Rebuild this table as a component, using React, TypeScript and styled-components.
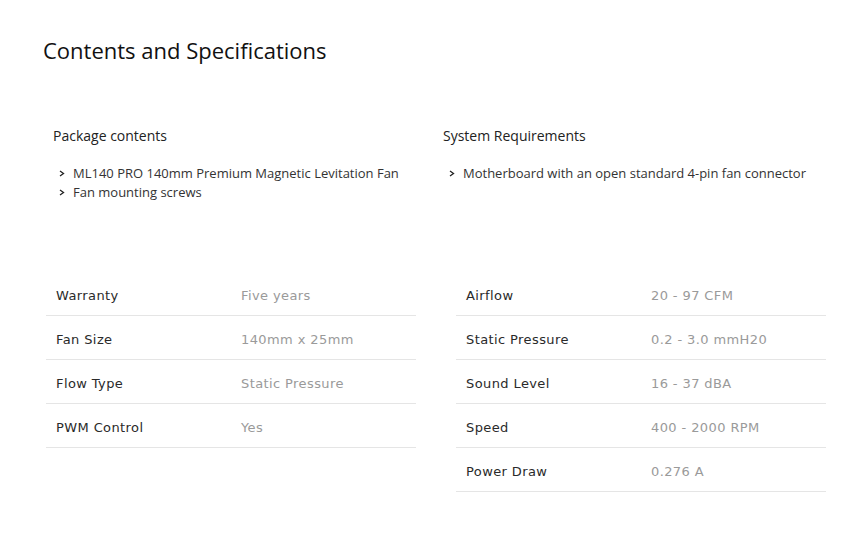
import styled, { createGlobalStyle } from "styled-components";

const GlobalStyle = createGlobalStyle`
  html, body {
    margin: 0;
    padding: 0;
    background: #fff;
  }
`;

const packageContents = [
  "ML140 PRO 140mm Premium Magnetic Levitation Fan",
  "Fan mounting screws",
];
const requirements = ["Motherboard with an open standard 4-pin fan connector"];

const leftSpecs = [
  ["Warranty", "Five years"],
  ["Fan Size", "140mm x 25mm"],
  ["Flow Type", "Static Pressure"],
  ["PWM Control", "Yes"],
];
const rightSpecs = [
  ["Airflow", "20 - 97 CFM"],
  ["Static Pressure", "0.2 - 3.0 mmH20"],
  ["Sound Level", "16 - 37 dBA"],
  ["Speed", "400 - 2000 RPM"],
  ["Power Draw", "0.276 A"],
];

const Chevron = () => (
  <svg width="6" height="7" viewBox="0 0 6 7">
    <path d="M1 1 L4.5 3.5 L1 6" fill="none" stroke="#222" strokeWidth="1.3" />
  </svg>
);

const SpecTable = ({ rows }: { rows: string[][] }) => (
  <Table>
    {rows.map(([label, value]) => (
      <Row key={label}>
        <Label>{label}</Label>
        <Value>{value}</Value>
      </Row>
    ))}
  </Table>
);

const App = () => {
  return (
    <Page>
      <GlobalStyle />
      <Title>Contents and Specifications</Title>
      <Columns>
        <Column>
          <Heading>Package contents</Heading>
          <List>
            {packageContents.map((item) => (
              <Item key={item}>
                <Chevron />
                <span>{item}</span>
              </Item>
            ))}
          </List>
        </Column>
        <Column>
          <Heading>System Requirements</Heading>
          <List>
            {requirements.map((item) => (
              <Item key={item}>
                <Chevron />
                <span>{item}</span>
              </Item>
            ))}
          </List>
        </Column>
      </Columns>
      <Tables>
        <SpecTable rows={leftSpecs} />
        <SpecTable rows={rightSpecs} />
      </Tables>
    </Page>
  );
};

export default App;

const Page = styled.div`
  width: 860px;
  height: 543px;
  box-sizing: border-box;
  padding: 35px 0 0 43px;
  font-family: "Open Sans", sans-serif;
  color: #222;
`;

const Title = styled.h1`
  margin: 0;
  font-size: 22px;
  font-weight: 400;
  line-height: 30px;
  color: #111;
`;

const Columns = styled.div`
  display: grid;
  grid-template-columns: 390px 390px;
  margin-top: 61px;
  padding-left: 10px;
`;

const Column = styled.div`
  display: flex;
  flex-direction: column;
`;

const Heading = styled.h3`
  margin: 0;
  font-size: 14px;
  font-weight: 400;
  line-height: 20px;
  color: #222;
`;

const List = styled.ul`
  list-style: none;
  margin: 18px 0 0;
  padding: 0 0 0 6px;
`;

const Item = styled.li`
  display: flex;
  align-items: center;
  gap: 8px;
  font-size: 13px;
  line-height: 19px;
  color: #333;
  svg {
    flex: none;
  }
`;

const Tables = styled.div`
  display: flex;
  gap: 40px;
  margin-top: 70px;
  padding-left: 3px;
  align-items: flex-start;
`;

const Table = styled.div`
  width: 370px;
  display: flex;
  flex-direction: column;
`;

const Row = styled.div`
  display: grid;
  grid-template-columns: 185px 1fr;
  height: 44px;
  padding-top: 3px;
  align-items: center;
  border-bottom: 1px solid #e5e5e5;
  box-sizing: border-box;
  font-family: "DejaVu Sans", sans-serif;
  font-size: 13px;
  letter-spacing: 0.4px;
`;

const Label = styled.div`
  padding-left: 10px;
  color: #2a2a2a;
`;

const Value = styled.div`
  padding-left: 10px;
  color: #9a9a9a;
`;
